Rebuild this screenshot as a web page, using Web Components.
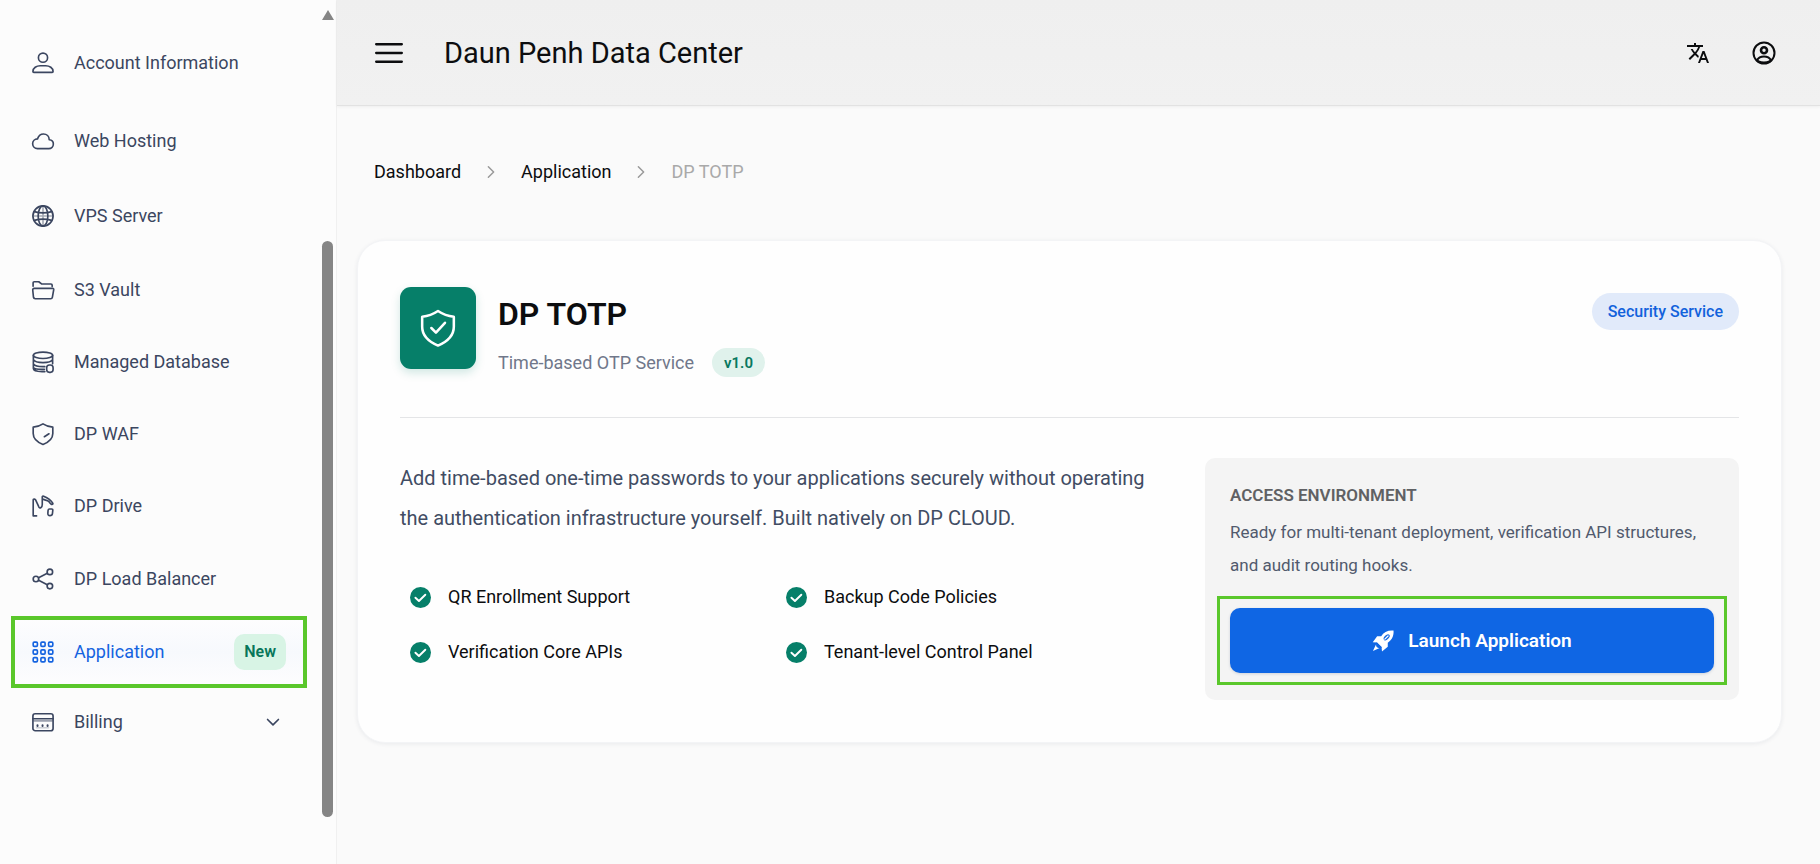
<!DOCTYPE html>
<html lang="en">
<head>
    <meta charset="UTF-8">
    <meta name="viewport" content="width=device-width, initial-scale=1.0">
    <title>Daun Penh Data Center</title>
    <style>
        body {
            margin: 0;
            font-family: Roboto, "Liberation Sans", sans-serif;
            font-size: 18px;
            line-height: 24px;
            color: #0c0d0f;
            background: #fafafa;
            --ink: #3b4660;
            --blue: #0f66e4;
            --green: #067f69;
            --mark: #5ac72b;
        }
    </style>
</head>
<body>
    <dp-shell>
        <dp-sidebar slot="side">
            <dp-nav-item icon="user">Account Information</dp-nav-item>
            <dp-nav-item icon="cloud">Web Hosting</dp-nav-item>
            <dp-nav-item icon="globe">VPS Server</dp-nav-item>
            <dp-nav-item icon="folder">S3 Vault</dp-nav-item>
            <dp-nav-item icon="database">Managed Database</dp-nav-item>
            <dp-nav-item icon="waf">DP WAF</dp-nav-item>
            <dp-nav-item icon="drive">DP Drive</dp-nav-item>
            <dp-nav-item icon="share">DP Load Balancer</dp-nav-item>
            <dp-nav-item icon="grid" active>Application<dp-badge slot="end" kind="new">New</dp-badge></dp-nav-item>
            <dp-nav-item icon="card">Billing<dp-icon slot="end" name="down" size="20" weight="2"></dp-icon></dp-nav-item>
        </dp-sidebar>
        <dp-topbar slot="top">Daun Penh Data Center</dp-topbar>
        <dp-breadcrumb></dp-breadcrumb>
        <dp-service-card>
            <span slot="title">DP TOTP</span>
            <span slot="subtitle">Time-based OTP Service</span>
            <dp-badge slot="version" kind="version">v1.0</dp-badge>
            <dp-badge slot="category" kind="category">Security Service</dp-badge>
            <span slot="text">Add time-based one-time passwords to your applications securely without operating the authentication infrastructure yourself. Built natively on DP CLOUD.</span>
            <dp-feature slot="features">QR Enrollment Support</dp-feature>
            <dp-feature slot="features">Backup Code Policies</dp-feature>
            <dp-feature slot="features">Verification Core APIs</dp-feature>
            <dp-feature slot="features">Tenant-level Control Panel</dp-feature>
            <dp-access-panel slot="panel">
                <span slot="title">ACCESS ENVIRONMENT</span>
                Ready for multi-tenant deployment, verification API structures, and audit routing hooks.
            </dp-access-panel>
        </dp-service-card>
    </dp-shell>

    <script>
        // all icons are drawn on a 24x24 grid
        const icons = {
            user: '<circle cx="12" cy="6.2" r="5"/><path d="M2 22.3c-.7 0-1-.4-1-1 0-4 4-6.3 8-6.3h6c4 0 8 2.3 8 6.3 0 .6-.3 1-1 1z"/>',
            cloud: '<path d="M6 20.300a5.500 5.500 0 0 1-5.300-5.400c0-3 2.400-5.200 5.300-5.200 1.200-3.400 3.600-5.300 6.500-5.300 3.600 0 6.200 2.700 6.300 6.200 2.600.3 4.500 2.100 4.500 4.700 0 2.900-2.200 5-5 5z"/>',
            globe: '<circle cx="12" cy="12" r="11"/><ellipse cx="12" cy="12" rx="5.300" ry="11"/><path d="M2.500 7.200c6 1.800 13 1.800 19 0M2.500 16.800c6-1.800 13-1.800 19 0"/><path d="M12 1v22M1 12h22" opacity=".45"/>',
            folder: '<path d="M1.200 8V4.200c0-.8.5-1.200 1.200-1.200h5l3 2.400h10.300c.8 0 1.300.5 1.300 1.300v1.600"/><path d="M2.500 10.300h20c.9 0 1.300.6 1.200 1.400l-1.500 8.300c-.2 1-.8 1.500-1.700 1.500h-17c-1.100 0-1.700-.6-1.900-1.600L.8 12c-.1-1 .6-1.700 1.700-1.700z"/>',
            database: '<ellipse cx="12" cy="4.700" rx="10.500" ry="3.500"/><path d="M1.500 4.700v14.500c0 1.800 4 3.300 9.500 3.300h3M22.500 4.700V14M1.500 9.500c1.500 2.700 6 3.200 10.500 3.200s9-.5 10.500-3.200M1.500 14c1.500 2.500 6 3.200 12.500 3M1.500 18c1.500 1.900 6 2.200 12 2"/><rect x="16" y="15.300" width="7" height="8" rx="3"/>',
            waf: '<path d="M12 1c3.200 2.200 6.500 3.200 10.700 3.500v7c0 5.500-4 9.300-10.700 12-6.700-2.700-10.700-6.500-10.700-12v-7C5.500 4.200 8.800 3.200 12 1z"/><path d="M13.500 15l5-3.200"/>',
            drive: '<path d="M5 22.800H1.300V5.300c0-1 1.700-1.200 2.500-.2l3.800 8.100c.5 1 1.300 1 2.200.4 1-.7 1.400-1.600 1.400-3.300V2.200c0-.9.7-1.100 1.500-.8 3.300 1.400 8.200 4.500 9.900 7.500.5 1-.2 1.600-1.200 1.300-1.400-.5-1.900-1.900-3.200-3.200-1.500-1.500-4.200-1.300-6-2.300"/><path d="M19 15.300h2.500c.8 0 1.300.5 1.200 1.300l-.4 3.700c-.2 1.500-1.200 2.200-2.700 2.200-1.700 0-2.400-1-2.300-2.500l.2-3c.1-1.100.6-1.700 1.500-1.700z"/>',
            share: '<circle cx="4.300" cy="12" r="3"/><circle cx="19.500" cy="4.300" r="3"/><circle cx="19.500" cy="19.700" r="3"/><path d="M7.200 10.700l9.500-4.900M7.200 13.300l9.500 4.900"/>',
            grid: [1.3, 9.7, 18.1].map(y => [1.3, 9.7, 18.1].map(x => `<rect x="${x}" y="${y}" width="4.600" height="4.600" rx="1.200"/>`).join('')).join(''),
            card: '<rect x="1" y="3" width="22" height="18.500" rx="2.500"/><path d="M1 8.500h22"/><path d="M2 10.700h20" opacity=".5"/><path d="M6 15.500v.8M11.500 15.500v.8M17 15.500v.8" stroke-width="2.200"/><path d="M5 18.300h13" opacity=".25"/>',
            down: '<path d="M5.500 9l6.500 6.500L18.500 9"/>',
            right: '<path d="M8.500 5l7 7-7 7"/>',
            menu: '<path d="M1 4.500h22M1 12h22M1 19.500h22" stroke-width="2"/>',
            shield: '<path d="M12 1.300c3 2 6.300 3.200 10 3.600v6.300c0 5.700-3.700 9.200-10 11.900C5.700 20.400 2 16.900 2 11.200V4.900c3.700-.4 7-1.600 10-3.600z"/><path d="M7.800 12l2.900 2.900 5.700-6.200"/>',
            check: '<circle cx="12" cy="12" r="12" fill="#067f69" stroke="none"/><path d="M6.200 12.300l4 3.700 7.300-7.200" stroke="#fff" stroke-width="2.200"/>',
            translate: '<path d="M12.870 15.070l-2.540-2.510.03-.03A17.520 17.520 0 0 0 14.070 6H17V4h-7V2H8v2H1v2h11.170C11.500 7.920 10.440 9.750 9 11.350 8.070 10.320 7.300 9.190 6.690 8h-2c.73 1.630 1.730 3.170 2.980 4.560l-5.090 5.020L4 19l5-5 3.110 3.110.76-2.040zM18.500 10h-2L12 22h2l1.120-3h4.750L21 22h2l-4.500-12zm-2.620 7l1.620-4.330L19.120 17h-3.240z" fill="currentColor" stroke="none"/>',
            account: '<circle cx="12" cy="12" r="10.500"/><circle cx="12" cy="9.200" r="3" stroke-width="2.600"/><path d="M5 19.300c1.500-2.800 4-3.800 7-3.800s5.500 1 7 3.800M6 20.300c3.500 1.600 8.500 1.600 12 0" stroke-width="2.200"/>',
            rocket: '<path d="M23.500.6c-6-.5-10.800 1.500-13.500 6.200H5.600L.8 13.300l4.800.3 4.800 4.800.5 5 6.300-5v-4.600c4.700-2.900 6.700-7.400 6.300-13.200z" fill="currentColor" stroke="none"/><ellipse cx="16" cy="8" rx="4" ry="2.300" transform="rotate(-45 16 8)" fill="#0f66e4" stroke="none"/><path d="M14 10l3.500-3.500" stroke-width="1.400"/><path d="M4.500 15.500L1 23l7.300-3.500c-1 .2-2 .2-2.800-.6s-1.200-2-1-3.400z" fill="currentColor" stroke="none"/><path d="M5 14l5 5" stroke="#0f66e4" stroke-width="1"/>'
        };

        function mount(el, html) {
            const root = el.attachShadow({ mode: 'open' });
            const template = document.createElement('template');
            template.innerHTML = html;
            root.appendChild(template.content.cloneNode(true));
        }

        class DpIcon extends HTMLElement {
            connectedCallback() {
                if (this.shadowRoot) return;
                const size = this.getAttribute('size') || 24;
                const weight = this.getAttribute('weight') || 1.8;
                mount(this, `
                    <style>
                        :host { display: block; flex: none; }
                        svg { display: block; overflow: visible; }
                    </style>
                    <svg width="${size}" height="${size}" viewBox="0 0 24 24" fill="none" stroke="currentColor"
                        stroke-width="${weight}" stroke-linecap="round" stroke-linejoin="round" aria-hidden="true">
                        ${icons[this.getAttribute('name')]}
                    </svg>
                `);
            }
        }

        class DpBadge extends HTMLElement {
            constructor() {
                super();
                mount(this, `
                    <style>
                        :host { display: inline-flex; align-items: center; justify-content: center; box-sizing: border-box; white-space: nowrap; }
                        :host([kind="new"]) { height: 36px; padding: 0 10px; border-radius: 10px; background: #d8f4e5; color: #08765a; font-size: 16px; font-weight: 600; }
                        :host([kind="version"]) { height: 29px; padding: 0 12px; border-radius: 15px; background: #e0f2ec; color: #08785f; font-size: 15px; font-weight: 600; }
                        :host([kind="category"]) { height: 37px; padding: 0 16px; border-radius: 19px; background: #e1eafa; color: #1262dc; font-size: 16px; font-weight: 500; }
                    </style>
                    <slot></slot>
                `);
            }
        }

        class DpNavItem extends HTMLElement {
            connectedCallback() {
                if (this.shadowRoot) return;
                mount(this, `
                    <style>
                        :host { display: flex; align-items: center; height: 72px; box-sizing: border-box; }
                        a { flex: 1; display: flex; align-items: center; gap: 20px; height: 100%; box-sizing: border-box; padding: 0 21px; color: var(--ink); text-decoration: none; }
                        .label { flex: 1; }
                        :host([active]) a { padding: 0 17px; border: 4px solid var(--mark); background: linear-gradient(#fdfdfe, #f7f9fd 50%, #fdfdfe); color: #1463e0; }
                        ::slotted(dp-icon) { margin-right: 3px; }
                    </style>
                    <a href="#"${this.hasAttribute('active') ? ' aria-current="page"' : ''}>
                        <dp-icon name="${this.getAttribute('icon')}" size="22"></dp-icon>
                        <span class="label"><slot></slot></span>
                        <slot name="end"></slot>
                    </a>
                `);
            }
        }

        class DpSidebar extends HTMLElement {
            constructor() {
                super();
                mount(this, `
                    <style>
                        :host { display: flex; background: #fcfcfc; border-right: 1px solid #f0f0f0; box-sizing: border-box; }
                        nav { flex: 1; padding: 23px 15px 0 11px; }
                        ::slotted(dp-nav-item:nth-child(1)) { height: 80px; }
                        ::slotted(dp-nav-item:nth-child(2)),
                        ::slotted(dp-nav-item:nth-child(3)) { height: 75px; }
                        ::slotted(dp-nav-item:nth-child(4)) { height: 73px; }
                        ::slotted(dp-nav-item:nth-child(8)) { height: 74px; }
                        ::slotted(dp-nav-item:last-child) { height: 68px; }
                        /* scroll bar: arrow on top, thumb below */
                        .track { width: 14px; padding-top: 10px; display: flex; flex-direction: column; align-items: flex-start; gap: 221px; }
                        .arrow { border: 6px solid transparent; border-top: 0; border-bottom: 10px solid #858585; }
                        .thumb { width: 11px; height: 576px; border-radius: 6px; background: #858585; }
                    </style>
                    <nav aria-label="Main"><slot></slot></nav>
                    <div class="track" aria-hidden="true"><div class="arrow"></div><div class="thumb"></div></div>
                `);
            }
        }

        class DpTopbar extends HTMLElement {
            constructor() {
                super();
                mount(this, `
                    <style>
                        :host { display: flex; align-items: center; height: 106px; padding: 0 44px 0 38px; box-sizing: border-box; background: linear-gradient(#efefef, #f1f1f1); border-bottom: 1px solid #e2e2e2; box-shadow: 0 1px 3px rgba(0, 0, 0, .05); }
                        button { border: 0; padding: 0; background: none; color: #0c0d0f; cursor: pointer; }
                        .title { flex: 1; margin-left: 41px; font-size: 29px; line-height: 36px; }
                        .actions { display: flex; gap: 42px; }
                    </style>
                    <button aria-label="Menu"><dp-icon name="menu" size="28"></dp-icon></button>
                    <span class="title"><slot></slot></span>
                    <div class="actions">
                        <button aria-label="Language"><dp-icon name="translate" size="24"></dp-icon></button>
                        <button aria-label="Account"><dp-icon name="account" size="24" weight="2"></dp-icon></button>
                    </div>
                `);
            }
        }

        class DpBreadcrumb extends HTMLElement {
            constructor() {
                super();
                mount(this, `
                    <style>
                        :host { display: block; }
                        nav { display: flex; align-items: center; gap: 21px; padding: 0 17px; }
                        a { color: #0c0d0f; text-decoration: none; }
                        dp-icon { color: #999; }
                        span { color: #a9a9a9; }
                    </style>
                    <nav aria-label="Breadcrumb">
                        <a href="#">Dashboard</a>
                        <dp-icon name="right" size="18" weight="2"></dp-icon>
                        <a href="#">Application</a>
                        <dp-icon name="right" size="18" weight="2"></dp-icon>
                        <span aria-current="page">DP TOTP</span>
                    </nav>
                `);
            }
        }

        class DpFeature extends HTMLElement {
            constructor() {
                super();
                mount(this, `
                    <style>
                        :host { display: flex; align-items: center; gap: 17px; }
                    </style>
                    <dp-icon name="check" size="21"></dp-icon>
                    <span><slot></slot></span>
                `);
            }
        }

        class DpAccessPanel extends HTMLElement {
            constructor() {
                super();
                mount(this, `
                    <style>
                        :host { display: block; padding: 24px 12px 15px; border-radius: 10px; background: #f4f4f4; box-sizing: border-box; }
                        h2 { margin: 0 13px; font-size: 17px; line-height: 26px; font-weight: 600; color: #606164; }
                        p { margin: 8px 13px 0; font-size: 17px; line-height: 33px; color: #515a6d; }
                        .frame { margin-top: 14px; padding: 9px 10px; border: 3px solid var(--mark); }
                        button { display: flex; align-items: center; justify-content: center; gap: 14px; width: 100%; height: 65px; border: 0; border-radius: 10px; background: var(--blue); color: #fff; font: inherit; font-size: 19px; font-weight: 600; cursor: pointer; box-shadow: 0 1px 3px rgba(60, 80, 120, .2); }
                    </style>
                    <h2><slot name="title"></slot></h2>
                    <p><slot></slot></p>
                    <div class="frame">
                        <button><dp-icon name="rocket" size="22"></dp-icon>Launch Application</button>
                    </div>
                `);
            }
        }

        class DpServiceCard extends HTMLElement {
            constructor() {
                super();
                mount(this, `
                    <style>
                        :host { display: block; margin-top: 56px; padding: 46px 42px 42px; border-radius: 28px; background: #fefefe; border: 1px solid #f3f4f6; box-shadow: 0 1px 4px rgba(40, 50, 80, .08); }
                        header { display: flex; align-items: flex-start; padding-bottom: 40px; border-bottom: 1px solid #e4e5e7; }
                        .tile { display: grid; place-items: center; width: 76px; height: 82px; border-radius: 11px; background: var(--green); color: #fff; box-shadow: 0 4px 10px rgba(6, 127, 105, .18); }
                        .names { flex: 1; margin: 8px 0 0 22px; }
                        h1 { margin: 0; font-size: 32px; line-height: 38px; font-weight: 600; }
                        .sub { display: flex; align-items: center; gap: 18px; margin-top: 15px; color: #70778a; }
                        .category { margin-top: 6px; }
                        .body { display: grid; grid-template-columns: 772fr 534fr; gap: 33px; margin-top: 40px; }
                        .text { margin: 0; font-size: 20px; line-height: 40px; color: #414c63; padding-right: 20px; }
                        .features { display: grid; grid-template-columns: 1fr 1fr; gap: 31px 0; margin-top: 47px; padding: 0 10px; }
                    </style>
                    <header>
                        <div class="tile"><dp-icon name="shield" size="38" weight="1.600"></dp-icon></div>
                        <div class="names">
                            <h1><slot name="title"></slot></h1>
                            <div class="sub"><slot name="subtitle"></slot><slot name="version"></slot></div>
                        </div>
                        <div class="category"><slot name="category"></slot></div>
                    </header>
                    <div class="body">
                        <div>
                            <p class="text"><slot name="text"></slot></p>
                            <div class="features"><slot name="features"></slot></div>
                        </div>
                        <slot name="panel"></slot>
                    </div>
                `);
            }
        }

        class DpShell extends HTMLElement {
            constructor() {
                super();
                mount(this, `
                    <style>
                        :host { display: grid; grid-template-columns: 337px minmax(0, 1fr); min-height: 100vh; }
                        .page { display: flex; flex-direction: column; }
                        main { padding: 54px 38px 40px 20px; }
                    </style>
                    <slot name="side"></slot>
                    <div class="page">
                        <slot name="top"></slot>
                        <main><slot></slot></main>
                    </div>
                `);
            }
        }

        customElements.define('dp-icon', DpIcon);
        customElements.define('dp-badge', DpBadge);
        customElements.define('dp-nav-item', DpNavItem);
        customElements.define('dp-sidebar', DpSidebar);
        customElements.define('dp-topbar', DpTopbar);
        customElements.define('dp-breadcrumb', DpBreadcrumb);
        customElements.define('dp-feature', DpFeature);
        customElements.define('dp-access-panel', DpAccessPanel);
        customElements.define('dp-service-card', DpServiceCard);
        customElements.define('dp-shell', DpShell);
    </script>
</body>
</html>
